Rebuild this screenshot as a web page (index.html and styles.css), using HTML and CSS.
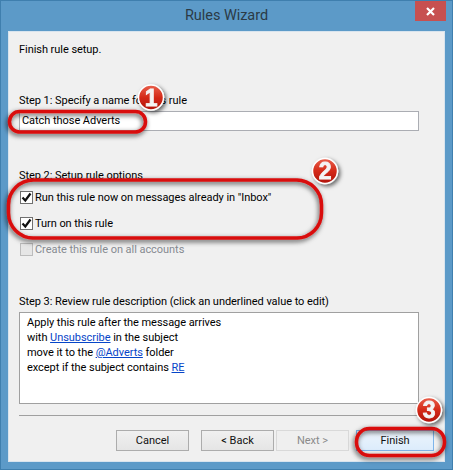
FILE: index.html
```html
<!DOCTYPE html>
<html lang="en">

<head>
    <meta charset="UTF-8">
    <title>Rules Wizard</title>
    <link rel="stylesheet" href="styles.css">
</head>

<body>
    <div class="window">
        <div class="titlebar">
            <span class="title">Rules Wizard</span>
            <div class="close">
                <svg width="9" height="9" viewBox="0 0 9 9">
                    <path d="M1 1L8 8M8 1L1 8" stroke="#fff" stroke-width="2.2" />
                </svg>
            </div>
        </div>
        <div class="content">
            <p class="intro">Finish rule setup.</p>
            <p class="step1">Step 1: Specify a name for this rule</p>
            <div class="name-box">Catch those Adverts</div>

            <p class="step2">Step 2: Setup rule options</p>
            <div class="check">
                <span class="box"><svg width="11" height="11" viewBox="0 0 11 11"><path d="M1.5 5.5L4.3 8.5L9.5 1.5" fill="none" stroke="#111" stroke-width="2.2" /></svg></span>
                <span>Run this rule now on messages already in "Inbox"</span>
            </div>
            <div class="check">
                <span class="box"><svg width="11" height="11" viewBox="0 0 11 11"><path d="M1.5 5.5L4.3 8.5L9.5 1.5" fill="none" stroke="#111" stroke-width="2.2" /></svg></span>
                <span>Turn on this rule</span>
            </div>
            <div class="check disabled">
                <span class="box"></span>
                <span>Create this rule on all accounts</span>
            </div>

            <p class="step3">Step 3: Review rule description (click an underlined value to edit)</p>
            <div class="desc">
                <p>Apply this rule after the message arrives</p>
                <p>with <a href="#">Unsubscribe</a> in the subject</p>
                <p>move it to the <a href="#">@Adverts</a> folder</p>
                <p>except if the subject contains <a href="#">RE</a></p>
            </div>
            <div class="line"></div>
            <div class="buttons">
                <button class="btn">Cancel</button>
                <button class="btn back">&lt; Back</button>
                <button class="btn" disabled>Next &gt;</button>
                <button class="btn finish">Finish</button>
            </div>
        </div>
    </div>

    <!-- callouts drawn on top of the screenshot -->
    <svg class="callouts" width="453" height="470" viewBox="0 0 453 470">
        <defs>
            <filter id="soft" x="-30%" y="-60%" width="160%" height="220%">
                <feDropShadow dx="-1" dy="2" stdDeviation="2.500" flood-color="#000" flood-opacity="0.7" />
            </filter>
            <filter id="badgeShadow" x="-50%" y="-50%" width="200%" height="200%">
                <feDropShadow dx="2" dy="2" stdDeviation="2.200" flood-color="#000" flood-opacity="0.6" />
            </filter>
            <linearGradient id="red" x1="0" y1="0" x2="0" y2="1">
                <stop offset="0" stop-color="#e9604c" />
                <stop offset="0.5" stop-color="#d42a18" />
                <stop offset="1" stop-color="#b01208" />
            </linearGradient>
        </defs>
        <rect class="ring" x="9.500" y="111.500" width="136" height="20.500" rx="10" ry="10" />
        <rect class="ring" x="8.500" y="180" width="313" height="58" rx="25" ry="25" />
        <rect class="ring" x="356.500" y="428.500" width="88" height="27" rx="13" ry="13" />

        <g filter="url(#badgeShadow)">
            <circle cx="151" cy="97.500" r="12.500" fill="url(#red)" stroke="#fff" stroke-width="1.500" />
            <text class="num" x="151" y="105.500">1</text>
        </g>
        <g filter="url(#badgeShadow)">
            <circle cx="325" cy="171" r="12.500" fill="url(#red)" stroke="#fff" stroke-width="1.500" />
            <text class="num" x="325" y="179">2</text>
        </g>
        <g filter="url(#badgeShadow)">
            <circle cx="429" cy="410" r="12.500" fill="url(#red)" stroke="#fff" stroke-width="1.500" />
            <text class="num" x="429" y="418">3</text>
        </g>
    </svg>
</body>

</html>
```

FILE: styles.css
```css
* {
    margin: 0;
    padding: 0;
    box-sizing: border-box;
}

body {
    width: 453px;
    height: 470px;
    overflow: hidden;
    font: 11px/15px Roboto, "Liberation Sans", sans-serif;
    letter-spacing: -0.05px;
    color: #000;
    position: relative;
}

.window {
    width: 453px;
    height: 470px;
    background: #5c9ac8;
    border: 1px solid #3f7fae;
    display: flex;
    flex-direction: column;
    padding: 0 7px 7px 7px;
}

.titlebar {
    height: 30px;
    position: relative;
    display: flex;
    justify-content: center;
    padding-top: 5px;
}

.title {
    font-size: 14.500px;
    line-height: 20px;
    color: #2b3a46;
}

.close {
    position: absolute;
    top: 0;
    right: -1px;
    width: 31px;
    height: 20px;
    background: #c75050;
    display: flex;
    align-items: center;
    justify-content: center;
}

.content {
    flex: 1;
    background: #f0f0f0;
    border: 1px solid #d8e4ee;
    padding: 0 10px 0 10px;
    display: flex;
    flex-direction: column;
}

.intro {
    margin-top: 10px;
}

.step1 {
    margin-top: 36px;
}

.name-box {
    margin-top: 3px;
    height: 20px;
    width: 400px;
    background: #fff;
    border: 1px solid #abadb3;
    padding-left: 2px;
    line-height: 18px;
}

.step2 {
    margin-top: 37px;
    margin-bottom: 8px;
}

.check {
    display: flex;
    align-items: center;
    gap: 2px;
    height: 13px;
    margin-bottom: 13px;
    padding-left: 1px;
}

.box {
    width: 13px;
    height: 13px;
    background: #fff;
    border: 1px solid #707070;
    display: flex;
    align-items: center;
    justify-content: center;
}

.disabled {
    color: #868a90;
}

.disabled .box {
    background: #e6e6e6;
    border-color: #bcbcbc;
}

.step3 {
    margin-top: 25px;
}

.desc {
    margin-top: 3px;
    width: 400px;
    height: 92px;
    background: #fff;
    border: 1px solid #a0a0a0;
    padding: 2px 7px;
}

.desc a {
    color: #0645c8;
}

.line {
    margin-top: 11px;
    width: 400px;
    height: 1px;
    background: #a0a0a0;
}

.buttons {
    margin-top: 14px;
    display: flex;
    padding-left: 97px;
}

.btn {
    width: 73px;
    height: 21px;
    font: inherit;
    color: #111;
    background: linear-gradient(#f0f0f0, #e5e5e5);
    border: 1px solid #acacac;
}

.back {
    margin-left: 12px;
    margin-right: 2px;
}

.btn[disabled] {
    color: #8a8a8a;
    background: #efefef;
    border-color: #d9d9d9;
}

.finish {
    width: 78px;
    margin-left: 7px;
    background: linear-gradient(#ecf4fc, #dcecfc);
    border-color: #7eb4ea;
}

.callouts {
    position: absolute;
    top: 0;
    left: 0;
}

.ring {
    fill: none;
    stroke: #d90a0a;
    stroke-width: 3.500;
    filter: url(#soft);
}

.num {
    font: bold 23px "Liberation Sans", sans-serif;
    fill: #f4f4f4;
    stroke: #f4f4f4;
    stroke-width: 0.8;
    text-anchor: middle;
}
```
